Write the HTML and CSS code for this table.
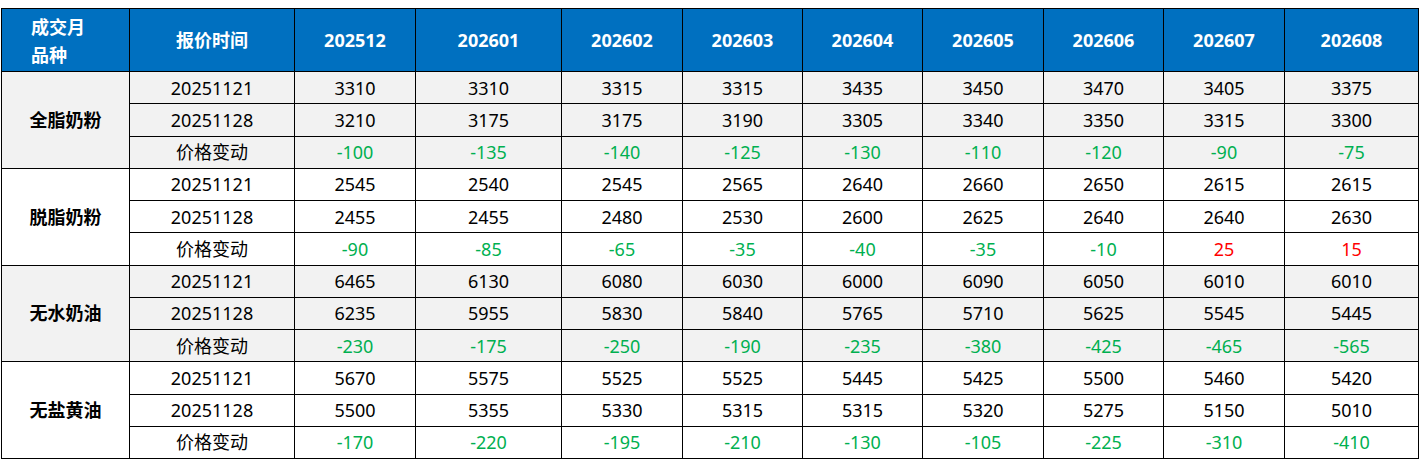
FILE: index.html
```html
<!DOCTYPE html>
<html lang="zh-CN">
<head>
<meta charset="utf-8">
<title>乳制品报价</title>
<link rel="stylesheet" href="styles.css">
</head>
<body>
<table class="price-table">
  <colgroup>
    <col class="c-name"><col class="c-date"><col class="c-n"><col class="c-w"><col class="c-n"><col class="c-m"><col class="c-m"><col class="c-n"><col class="c-m"><col class="c-n"><col class="c-last">
  </colgroup>
  <thead>
    <tr class="head-row">
      <th class="corner"><div>成交月</div><div>品种</div></th>
      <th>报价时间</th>
      <th>202512</th><th>202601</th><th>202602</th><th>202603</th><th>202604</th><th>202605</th><th>202606</th><th>202607</th><th>202608</th>
    </tr>
  </thead>
  <tbody class="grp grey">
    <tr><td class="name" rowspan="3">全脂奶粉</td><td>20251121</td><td>3310</td><td>3310</td><td>3315</td><td>3315</td><td>3435</td><td>3450</td><td>3470</td><td>3405</td><td>3375</td></tr>
    <tr><td>20251128</td><td>3210</td><td>3175</td><td>3175</td><td>3190</td><td>3305</td><td>3340</td><td>3350</td><td>3315</td><td>3300</td></tr>
    <tr><td>价格变动</td><td class="dn">-100</td><td class="dn">-135</td><td class="dn">-140</td><td class="dn">-125</td><td class="dn">-130</td><td class="dn">-110</td><td class="dn">-120</td><td class="dn">-90</td><td class="dn">-75</td></tr>
  </tbody>
  <tbody class="grp">
    <tr><td class="name" rowspan="3">脱脂奶粉</td><td>20251121</td><td>2545</td><td>2540</td><td>2545</td><td>2565</td><td>2640</td><td>2660</td><td>2650</td><td>2615</td><td>2615</td></tr>
    <tr><td>20251128</td><td>2455</td><td>2455</td><td>2480</td><td>2530</td><td>2600</td><td>2625</td><td>2640</td><td>2640</td><td>2630</td></tr>
    <tr><td>价格变动</td><td class="dn">-90</td><td class="dn">-85</td><td class="dn">-65</td><td class="dn">-35</td><td class="dn">-40</td><td class="dn">-35</td><td class="dn">-10</td><td class="up">25</td><td class="up">15</td></tr>
  </tbody>
  <tbody class="grp grey">
    <tr><td class="name" rowspan="3">无水奶油</td><td>20251121</td><td>6465</td><td>6130</td><td>6080</td><td>6030</td><td>6000</td><td>6090</td><td>6050</td><td>6010</td><td>6010</td></tr>
    <tr><td>20251128</td><td>6235</td><td>5955</td><td>5830</td><td>5840</td><td>5765</td><td>5710</td><td>5625</td><td>5545</td><td>5445</td></tr>
    <tr><td>价格变动</td><td class="dn">-230</td><td class="dn">-175</td><td class="dn">-250</td><td class="dn">-190</td><td class="dn">-235</td><td class="dn">-380</td><td class="dn">-425</td><td class="dn">-465</td><td class="dn">-565</td></tr>
  </tbody>
  <tbody class="grp">
    <tr><td class="name" rowspan="3">无盐黄油</td><td>20251121</td><td>5670</td><td>5575</td><td>5525</td><td>5525</td><td>5445</td><td>5425</td><td>5500</td><td>5460</td><td>5420</td></tr>
    <tr><td>20251128</td><td>5500</td><td>5355</td><td>5330</td><td>5315</td><td>5315</td><td>5320</td><td>5275</td><td>5150</td><td>5010</td></tr>
    <tr><td>价格变动</td><td class="dn">-170</td><td class="dn">-220</td><td class="dn">-195</td><td class="dn">-210</td><td class="dn">-130</td><td class="dn">-105</td><td class="dn">-225</td><td class="dn">-310</td><td class="dn">-410</td></tr>
  </tbody>
</table>
</body>
</html>
```
FILE: styles.css
```css
html, body {
  margin: 0;
  background: #ffffff;
}
body {
  padding: 8px 0 0 1px;
  font-family: "Noto Sans", "Noto Sans CJK SC", sans-serif;
  font-size: 18px;
  color: #000;
}
.price-table {
  border-collapse: collapse;
  table-layout: fixed;
  width: 1418px;
}
.c-name { width: 128px; }
.c-date { width: 165px; }
.c-n { width: 121px; }
.c-w { width: 146px; }
.c-m { width: 120px; }
.c-last { width: 134px; }

.price-table th,
.price-table td {
  border: 1px solid #000;
  padding: 0;
  text-align: center;
  vertical-align: middle;
  line-height: 22px;
  white-space: nowrap;
}
.head-row {
  height: 63px;
}
.head-row th {
  background: #0070c0;
  color: #fff;
  font-weight: 700;
}
.head-row th.corner {
  text-align: left;
  padding-left: 29px;
  line-height: 28px;
  padding-top: 2px;
}
.grp tr {
  height: 32.25px;
}
.grp.grey td {
  background: #f2f2f2;
}
.price-table td.name {
  font-weight: 700;
}
.dn { color: #00b050; }
.up { color: #ff0000; }
```
